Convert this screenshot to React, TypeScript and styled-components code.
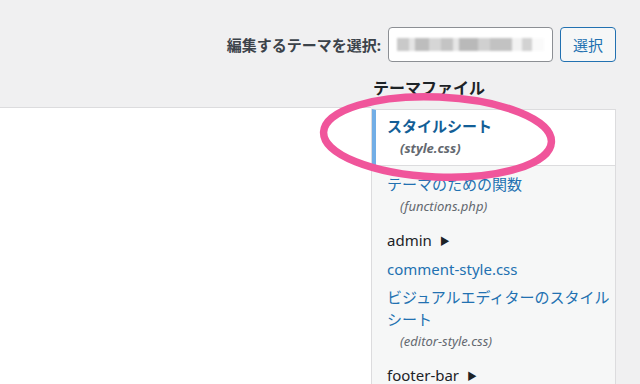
import React from 'react';
import styled, { createGlobalStyle } from 'styled-components';

const GlobalStyle = createGlobalStyle`
  html, body {
    margin: 0;
    padding: 0;
    background: #f0f0f1;
    overflow: hidden;
  }
  body {
    font-family: "Noto Sans", "Noto Sans CJK JP", sans-serif;
    color: #1d2327;
  }
`;

const Page = styled.div`
  position: relative;
  width: 640px;
  height: 384px;
  padding: 27px 24px 0 0;
  box-sizing: border-box;
  overflow: hidden;
`;

const TopBar = styled.div`
  display: flex;
  justify-content: flex-end;
  align-items: center;
  gap: 7px;
  height: 35px;
`;

const Label = styled.span`
  font-size: 15px;
  font-weight: bold;
  color: #3c434a;
`;

const SelectBox = styled.div`
  width: 165px;
  height: 35px;
  box-sizing: border-box;
  border: 1px solid #8c8f94;
  border-radius: 4px;
  background: #fff;
  display: flex;
  align-items: center;
  padding: 0 8px;
`;

const Blurred = styled.div`
  flex: 1;
  height: 13px;
  filter: blur(1.2px);
  background: linear-gradient(
    90deg,
    #c9c9c9 0 8%,
    #e4e4e4 8% 12%,
    #bdbdbd 12% 22%,
    #d6d6d6 22% 30%,
    #c4c4c4 30% 38%,
    #e6e6e6 38% 42%,
    #b9b9b9 42% 55%,
    #d0d0d0 55% 63%,
    #c2c2c2 63% 78%,
    #f2f2f2 78% 85%,
    #d2d2d2 85% 92%,
    #fafafa 92% 100%
  );
`;

const Button = styled.button`
  width: 56px;
  height: 35px;
  box-sizing: border-box;
  border: 1px solid #2271b1;
  border-radius: 4px;
  background: #f6f7f7;
  color: #2271b1;
  font-family: inherit;
  font-size: 15px;
  padding: 0;
`;

const Main = styled.div`
  display: flex;
  align-items: flex-start;
`;

const Editor = styled.div`
  flex: 1;
  margin-top: 45px;
  height: 300px;
  background: #fff;
  border-top: 1px solid #dcdcde;
`;

const Sidebar = styled.div`
  width: 245px;
`;

const Heading = styled.h2`
  margin: 15px 0 10px 2px;
  font-size: 16px;
  line-height: 22px;
  font-weight: bold;
  color: #1d2327;
`;

const FileList = styled.ul`
  list-style: none;
  margin: 0;
  padding: 0 0 40px;
  background: #f6f7f7;
  border-left: 1px solid #dcdcde;
  border-right: 1px solid #dcdcde;
`;

const Item = styled.li<{ $active?: boolean }>`
  font-size: 15px;
  line-height: 22px;
  padding: ${(p) => (p.$active ? '5px 2px 0 11px' : '3px 2px 3px 15px')};
  margin-bottom: ${(p) => (p.$active ? '4px' : '0')};
  background: ${(p) => (p.$active ? '#fff' : 'transparent')};
  border-left: ${(p) => (p.$active ? '4px solid #72aee6' : 'none')};
  border-top: ${(p) => (p.$active ? '1px solid #dcdcde' : 'none')};
  border-bottom: ${(p) => (p.$active ? '1px solid #dcdcde' : 'none')};
  font-weight: ${(p) => (p.$active ? 'bold' : 'normal')};
`;

const FileLink = styled.span<{ $active?: boolean }>`
  display: block;
  color: ${(p) => (p.$active ? '#135e96' : '#2271b1')};
`;

const FileName = styled.span`
  display: block;
  padding: 0 0 6px 13px;
  font-size: 13px;
  font-style: italic;
  color: #646970;
`;

const Folder = styled.span`
  color: #1d2327;
`;

const Arrow = styled.span`
  display: inline-block;
  margin-left: 8px;
  font-size: 10px;
  vertical-align: 1px;
`;

const Annotation = styled.svg`
  position: absolute;
  left: 0;
  top: 0;
  pointer-events: none;
`;

const files = [
  { title: 'スタイルシート', file: '(style.css)', active: true },
  { title: 'テーマのための関数', file: '(functions.php)' },
  { folder: 'admin' },
  { title: 'comment-style.css' },
  { title: 'ビジュアルエディターのスタイルシート', file: '(editor-style.css)' },
  { folder: 'footer-bar' },
];

export default function App() {
  return (
    <Page>
      <GlobalStyle />
      <TopBar>
        <Label>編集するテーマを選択:</Label>
        <SelectBox>
          <Blurred />
        </SelectBox>
        <Button>選択</Button>
      </TopBar>
      <Main>
        <Editor />
        <Sidebar>
          <Heading>テーマファイル</Heading>
          <FileList>
            {files.map((f, i) => (
              <Item key={i} $active={f.active}>
                {f.folder ? (
                  <Folder>
                    {f.folder}
                    <Arrow>▶</Arrow>
                  </Folder>
                ) : (
                  <FileLink $active={f.active}>
                    {f.title}
                    {f.file && <FileName>{f.file}</FileName>}
                  </FileLink>
                )}
              </Item>
            ))}
          </FileList>
        </Sidebar>
      </Main>
      <Annotation width="640" height="384" viewBox="0 0 640 384">
        <ellipse
          cx="437.5"
          cy="137"
          rx="114"
          ry="40"
          transform="rotate(2.5 437.5 137)"
          fill="none"
          stroke="#f0559b"
          strokeWidth="7.5"
        />
      </Annotation>
    </Page>
  );
}
